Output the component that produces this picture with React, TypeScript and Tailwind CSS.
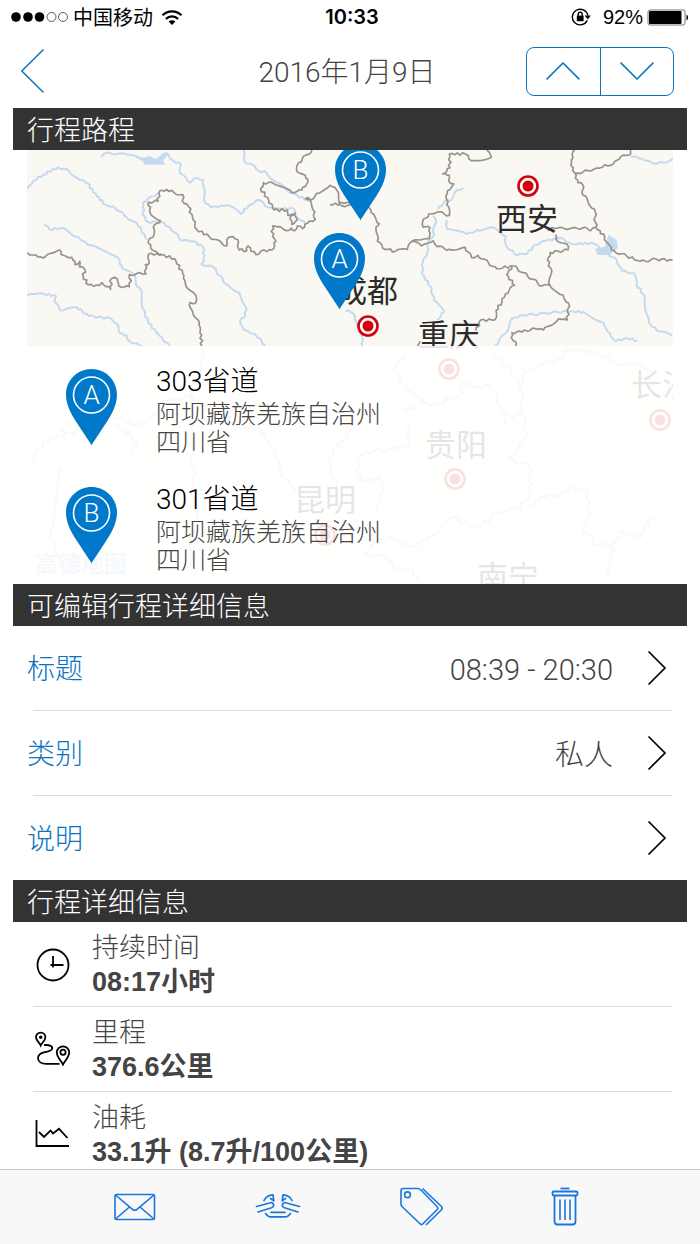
import type { ReactNode } from "react";

interface Stop {
    letter: string;
    road: string;
    region: string;
    province: string;
}

const STOPS: Stop[] = [
    { letter: 'A', road: '303省道', region: '阿坝藏族羌族自治州', province: '四川省' },
    { letter: 'B', road: '301省道', region: '阿坝藏族羌族自治州', province: '四川省' },
];

const EDITABLE_ROWS = [
    { label: '标题', value: '08:39 - 20:30' },
    { label: '类别', value: '私人' },
    { label: '说明', value: '' },
];

// Map lines, left and right halves, on a 3x grid
const BORDERS_LEFT = [
    "M82 338 L100 345 L130 354 L152 340 L178 330 L190 346 L215 352 L225 374 L240 364 L238 380 L254 388 L250 410 L265 434 L298 436 L306 428 L332 448 L334 416 L352 416 L356 438 L388 440 L394 422 L388 404 L420 398 L438 402 L436 374 L448 368 L446 342 L486 344",
    "M482 242 L450 218 L446 186 L474 184 L478 154 L500 148 L522 158 L548 164 L552 190 L566 200 L580 240 L590 268 L628 290 L680 318 L686 292 L700 290 L716 306 L718 330 L740 332 L744 318 L768 344 L784 332 L816 330 L828 304 L818 290 L818 258 L840 260 L860 272 L874 264 L884 272 L892 258 L908 266 L922 250 L946 238 L940 210 L930 180 L916 176 L940 176 L950 160 L990 136 L1010 150 L1018 188 L1034 200 L1060 194",
    "M482 242 L460 262 L462 284 L446 300 L452 324 L476 342 L524 356 L548 400 L556 430 L590 476 L586 490 L570 488 L574 508 L598 546 L606 618",
    "M936 30 L920 44 L896 68 L892 96 L916 106 L924 126 L906 150 L876 158 L820 130 L790 128 L782 146 L806 180 L822 210 L862 210 L864 226 L884 226 L892 240 L876 254 L870 236 L888 218",
];

const RIVERS_LEFT = [
    "M82 148 L100 122 L130 104 L174 82 L206 92 L232 114 L262 130 L290 168 L316 194 L346 204 L380 232 L412 250 L440 298",
    "M132 254 L148 268 L190 264 L228 290 L270 316 L330 342 L356 356 L366 384 L404 402 L412 440 L424 450 L430 508 L446 550 L480 588 L508 618",
    "M82 466 L116 460 L168 468 L164 486 L184 512 L230 502 L266 528 L334 536 L356 560 L360 580 L380 586 L388 604 L428 618",
    "M304 52 L320 38 L380 44 L430 56 L460 62 L500 40 L520 62 L544 74 L540 100 L570 128 L584 114 L610 120 L612 180 L632 202 L664 196 L690 198 L722 222 L746 196 L776 180 L806 202 L840 206 L880 206 L890 230 L916 250",
    "M476 158 L430 186 L430 226 L444 246 L486 246 L510 262 L546 302 L580 304 L610 322 L612 364 L604 372 L640 382 L680 434 L718 458 L738 500 L736 526 L720 544 L730 568 L768 586 L796 616",
    "M730 30 L736 68 L760 76 L776 92 L800 98 L822 122 L876 160 L930 184",
];

const BORDERS_RIGHT = [
    "M-60 194 L-20 190 L20 186 L62 208 L76 232 L88 252 L78 270 L82 304 L98 324 L136 334 L172 328 L186 304 L214 318 L250 302 L262 320 L298 328 L346 322 L364 352 L384 346 L440 386 L490 378 L520 398 L576 438 L600 436 L640 466 L656 490 L652 540 L626 536 L580 570 L556 566 L516 576 L486 578 L484 592 L498 606 L496 618",
    "M186 304 L210 300 L238 296 L240 264 L220 262 L218 244 L236 222 L262 216 L298 226 L298 206 L290 194 L292 152 L312 132 L296 122 L298 106 L278 102 L300 84 L298 42 L346 42 L364 62 L424 52 L410 30",
    "M674 30 L664 60 L668 92 L676 100 L714 92 L740 84 L790 72 L812 50 L842 42 L842 30",
    "M676 100 L684 128 L698 134 L696 158 L714 184 L734 208 L738 262 L764 290 L784 330 L830 348 L870 364 L920 358 L968 360",
    "M590 268 L630 262 L690 268 L704 262 L722 272 L738 262",
    "M616 284 L618 298 L650 312 L654 330 L600 338 L592 360 L602 384 L600 436",
    "M486 380 L470 404 L494 436 L466 462 L456 486 L438 512 L434 540 L392 540 L378 572",
    "M210 604 L202 618",
];

const RIVERS_RIGHT = [
    "M340 144 L322 150 L306 178 L284 184 L264 208",
    "M248 228 L258 240 L252 262 L250 290 L234 306 L232 336 L218 368 L218 404 L242 440 L252 480 L282 516 L262 540",
    "M290 240 L292 268 L350 282 L380 270 L436 264 L468 290 L466 308 L480 330 L502 346 L532 340 L556 314 L590 302 L630 294 L666 312 L730 310 L764 336 L800 360 L816 392 L852 400 L860 434 L880 462 L896 546 L920 572 L966 586",
    "M434 618 L466 580 L488 534 L520 526 L590 520 L640 514 L700 516 L760 548 L780 580 L798 604 L830 594 L862 602",
    "M842 50 L876 56 L908 70 L942 68 L968 56",
    "M-14 512 L10 520 L22 560 L36 590 L38 618",
];

const BORDERS_BOTTOM = [
    "M90 350 L130 290 L210 262 L270 250 L340 215 L400 238 L440 235 L480 180 L560 150 L720 250 L780 252 L830 330 L850 400 L890 440",
    "M340 235 L390 270 L410 305 L390 325",
    "M610 10 L600 90 L570 140 L575 330 L590 520 L570 600 L585 700",
    "M1100 200 L1040 280 L1000 310 L990 370 L1010 420",
    "M1216 30 L1180 70 L1220 130 L1290 185 L1380 150 L1390 110 L1430 130 L1470 120 L1500 180 L1540 220 L1570 190 L1575 280 L1530 345 L1590 360 L1590 440 L1560 490 L1500 500 L1470 525 L1420 550 L1360 515 L1300 570 L1240 605 L1170 580 L1110 600 L1100 630 L1160 640 L1180 670 L1240 675 L1255 705",
    "M1250 190 L1210 190 L1220 215",
    "M1520 240 L1500 185",
    "M1480 30 L1530 70 L1560 120 L1570 190",
    "M1560 120 L1580 80 L1620 55 L1690 45 L1690 15 L1780 20 L1860 60 L1930 60 L1960 90",
    "M1590 480 L1640 450 L1680 455 L1710 430 L1760 435 L1770 500 L1750 550 L1790 600 L1840 600 L1820 700",
    "M1840 600 L1860 560 L1920 580 L1950 520 L1966 518",
    "M1070 350 L1090 320 L1160 315 L1225 300 L1225 240",
    "M1070 350 L1080 405 L1140 395 L1150 430 L1130 500",
    "M180 370 L150 560 L175 640",
    "M180 250 L200 290",
];

const CITY_DOTS = [
    { cx: 501, cy: 36 },
    { cx: 341, cy: 176 },
    { cx: 422, cy: 219 },
    { cx: 633, cy: 270 },
    { cx: 428, cy: 329 },
    { cx: 298, cy: 385 },
];

const CITY_NAMES = [
    { name: '西安', x: 469, y: 80 },
    { name: '成都', x: 309, y: 152 },
    { name: '重庆', x: 391, y: 196 },
    { name: '贵阳', x: 398, y: 306 },
    { name: '昆明', x: 267, y: 361 },
    { name: '长沙', x: 604, y: 246 },
    { name: '南宁', x: 450, y: 438 },
];

// Splits every segment into short steps and wobbles them, so lines look surveyed
function roughen(d: string, amount: number) {
    const points = d.slice(1).split(' L').map((p) => p.split(' ').map(Number));
    let out = `M${points[0][0]} ${points[0][1]}`;
    for (let i = 1; i < points.length; i++) {
        const [x0, y0] = points[i - 1];
        const [x1, y1] = points[i];
        const length = Math.hypot(x1 - x0, y1 - y0);
        const steps = Math.max(1, Math.round(length / 8));
        for (let s = 1; s < steps; s++) {
            const x = x0 + ((x1 - x0) * s) / steps;
            const y = y0 + ((y1 - y0) * s) / steps;
            const offset = Math.sin(x * 12.9898 + y * 78.233) * amount;
            out += `L${(x - ((y1 - y0) / length) * offset).toFixed(1)} ${(y + ((x1 - x0) / length) * offset).toFixed(1)}`;
        }
        out += `L${x1} ${y1}`;
    }
    return out;
}

function PinShape({ letter }: { letter: string }) {
    return (
        <>
            <path
                d="M25.500 0C11.400 0 0 11.400 0 25.500C0 36 5 44.500 10 52.500L21.500 70C23.500 73 24.500 74 25.500 76.500C26.500 74 27.500 73 29.500 70L41 52.500C46 44.500 51 36 51 25.500C51 11.400 39.600 0 25.500 0Z"
                fill="#0079cb"
            />
            <circle cx="25.500" cy="26" r="18" fill="none" stroke="#fff" strokeWidth="1.600" />
            <text x="25.500" y="34.500" textAnchor="middle" fontSize="26" fill="#fff" className="font-['Roboto',sans-serif] font-light">
                {letter}
            </text>
        </>
    );
}

function Lines({ paths, color, width, wobble }: { paths: string[]; color: string; width: number; wobble: number }) {
    return (
        <g fill="none" stroke={color} strokeWidth={width} strokeLinejoin="round">
            {paths.map((d) => <path key={d} d={roughen(d, wobble)} />)}
        </g>
    );
}

function RouteMap() {
    return (
        <svg
            className="absolute inset-0 h-full w-full"
            viewBox="0 0 646 434"
            preserveAspectRatio="xMidYMin slice"
            role="img"
            aria-label="行程路程"
        >
            <rect width="646" height="434" fill="#faf8f2" />
            <g transform="translate(-27 -10) scale(.3333)">
                <Lines paths={RIVERS_LEFT} color="#c3daf0" width={6} wobble={3} />
                <path d="M396 46L430 54L448 48L470 58L488 40L504 44L490 60L494 74L434 74L428 64Z" fill="#c3daf0" />
                <Lines paths={BORDERS_LEFT} color="#96938b" width={5} wobble={4} />
            </g>
            <g transform="translate(323 -10) scale(.3333)">
                <Lines paths={RIVERS_RIGHT} color="#c3daf0" width={6} wobble={3} />
                <path d="M776 284L800 300L804 324L790 334L780 346L742 344L736 326L764 320Z" fill="#c3daf0" />
                <Lines paths={BORDERS_RIGHT} color="#96938b" width={5} wobble={4} />
            </g>
            <g transform="translate(-27 195) scale(.3333)">
                <Lines paths={BORDERS_BOTTOM} color="#d6c2c2" width={6} wobble={6} />
            </g>
            {CITY_DOTS.map((dot) => (
                <g key={`${dot.cx}-${dot.cy}`}>
                    <circle cx={dot.cx} cy={dot.cy} r="9.500" fill="#fff" stroke="#d4000f" strokeWidth="2.600" />
                    <circle cx={dot.cx} cy={dot.cy} r="5.500" fill="#d4000f" />
                </g>
            ))}
            <g fontSize="31" fill="#2b2b2b" className="font-['Noto_Sans_CJK_SC',sans-serif]">
                {CITY_NAMES.map((city) => <text key={city.name} x={city.x} y={city.y}>{city.name}</text>)}
            </g>
            <text x="8" y="422" fontSize="23" fill="#a9c4e4" className="font-['Noto_Sans_CJK_SC',sans-serif] font-bold">
                高德地图
            </text>
            <g transform="translate(308 -6)"><PinShape letter="B" /></g>
            <g transform="translate(287 83)"><PinShape letter="A" /></g>
        </svg>
    );
}

function SectionHeader({ children }: { children: ReactNode }) {
    return (
        <h2 className="mx-[13px] flex h-[42px] items-center bg-[#333] px-[14px] pt-1 text-[27px] leading-[36px] font-light text-white">
            {children}
        </h2>
    );
}

function StatusBar() {
    return (
        <div className="grid h-[34px] grid-cols-[1fr_auto_1fr] items-center px-[11px] text-black">
            <div className="flex items-center">
                <svg width="58" height="12" viewBox="0 0 58 12">
                    <g fill="#000">
                        <circle cx="5" cy="6" r="4.800" />
                        <circle cx="17" cy="6" r="4.800" />
                        <circle cx="28.500" cy="6" r="4.800" />
                    </g>
                    <g fill="none" stroke="#333" strokeWidth="0.800">
                        <circle cx="40.500" cy="6" r="4.500" />
                        <circle cx="52" cy="6" r="4.500" />
                    </g>
                </svg>
                <span className="ml-1 font-['Noto_Sans_CJK_SC',sans-serif] text-[20px] leading-[24px]">中国移动</span>
                <svg className="ml-2" width="22" height="17" viewBox="0 0 22 17" fill="none" stroke="#000" strokeWidth="2.300">
                    <path d="M1.500 6.200C6.800 1 15.200 1 20.500 6.200" />
                    <path d="M5 9.800C8.300 6.600 13.700 6.600 17 9.800" />
                    <path d="M11 16L7.600 12.600C9.500 10.900 12.500 10.900 14.400 12.600Z" fill="#000" stroke="none" />
                </svg>
            </div>
            <span className="pl-1 font-['Inter',sans-serif] text-[20px] leading-[24px] font-semibold">10:33</span>
            <div className="flex items-center justify-end">
                <svg width="20" height="18" viewBox="0 0 20 18" fill="none" stroke="#000" strokeWidth="1.400">
                    <path d="M16.200 12.400A7.800 7.800 0 1 1 16.800 7.500" />
                    <path d="M13.600 7.400H19.800L16.800 11.400Z" fill="#000" stroke="none" />
                    <rect x="5.800" y="7.600" width="6.800" height="5.600" fill="#000" stroke="none" />
                    <path d="M7.200 8V6.200A2 2 0 0 1 11.200 6.200V8" />
                </svg>
                <span className="ml-3 font-['Liberation_Sans',sans-serif] text-[20px] leading-[24px]">92%</span>
                <svg className="ml-1" width="42" height="17" viewBox="0 0 42 17">
                    <rect x="1" y="1" width="37" height="15" rx="2" fill="#fff" stroke="#777" strokeWidth="1" />
                    <rect x="2" y="2" width="32.500" height="13" rx="1" fill="#000" />
                    <path d="M39.500 5.500C41.600 6.200 41.600 10.800 39.500 11.500Z" fill="#000" />
                </svg>
            </div>
        </div>
    );
}

function NavBar() {
    return (
        <header className="grid h-[74px] grid-cols-[1fr_auto_1fr] items-center pr-[26px] pl-5 text-[#0b74bf]">
            <button type="button" aria-label="返回" className="justify-self-start">
                <svg width="25" height="46" viewBox="0 0 25 46" fill="none" stroke="currentColor" strokeWidth="1.500">
                    <path d="M23.500 1.500L1.800 23L23.500 44.500" />
                </svg>
            </button>
            <h1 className="pt-[3px] text-[28px] leading-[36px] font-light text-[#444]">2016年1月9日</h1>
            <div className="flex h-[49px] w-[148px] divide-x divide-[#0b74bf] justify-self-end rounded-lg border border-[#0b74bf]">
                <button type="button" aria-label="上一个" className="flex flex-1 items-center justify-center">
                    <svg width="34" height="18" viewBox="0 0 34 18" fill="none" stroke="currentColor" strokeWidth="1.500">
                        <path d="M0.600 17.400L17 1L33.400 17.400" />
                    </svg>
                </button>
                <button type="button" aria-label="下一个" className="flex flex-1 items-center justify-center">
                    <svg width="34" height="18" viewBox="0 0 34 18" fill="none" stroke="currentColor" strokeWidth="1.500">
                        <path d="M0.600 0.600L17 17L33.400 0.600" />
                    </svg>
                </button>
            </div>
        </header>
    );
}

function DetailRow({ icon, label, value }: { icon: ReactNode; label: string; value: string }) {
    return (
        <div className="mr-7 ml-[33px] flex items-center border-b border-[#dcdcdc] py-2 last:border-b-0 last:pb-0">
            <div className="w-[59px] shrink-0">{icon}</div>
            <dl className="text-[27px] text-[#444]">
                <dt className="leading-[36px] font-light">{label}</dt>
                <dd className="font-['Liberation_Sans','Noto_Sans_CJK_SC',sans-serif] leading-[32px] font-bold">{value}</dd>
            </dl>
        </div>
    );
}

function ClockIcon() {
    return (
        <svg width="38" height="38" viewBox="0 0 38 38" fill="none" stroke="#000" strokeWidth="1.800">
            <circle cx="20" cy="20" r="15.500" />
            <path d="M20 11V22.500M17.500 20H30.500" />
        </svg>
    );
}

function RouteIcon() {
    return (
        <svg width="38" height="38" viewBox="0 0 38 38" fill="none" stroke="#000" strokeWidth="1.800">
            <path d="M7.700 15.500C6.500 12.500 3 10.500 3 7.300A4.700 4.700 0 0 1 12.400 7.300C12.400 10.500 9 12.500 7.700 15.500Z" />
            <circle cx="7.700" cy="7.200" r="1.700" fill="#000" stroke="none" />
            <path d="M30 34.500C28 30.500 23.800 27 23.800 22.500A6.200 6.200 0 0 1 36.200 22.500C36.200 27 32 30.500 30 34.500Z" />
            <circle cx="30" cy="22.300" r="2.600" />
            <path d="M11 15.200C16 14.500 19.500 16 19.200 18.500C18.800 21.500 14 21.500 11 22.300C7 23.300 4.800 25.500 5 28.500C5.300 32 9 33.800 13 33.800H26.500" />
        </svg>
    );
}

function ChartIcon() {
    return (
        <svg width="38" height="38" viewBox="0 0 38 38" fill="none" stroke="#000" strokeWidth="1.800">
            <path d="M3.500 5V31H36" />
            <path d="M6 17L11 22L17.500 15.500L20 18.500L26 13.800L34.500 23" />
        </svg>
    );
}

function ToolbarButton({ label, children }: { label: string; children: ReactNode }) {
    return (
        <button type="button" aria-label={label} className="flex flex-1 justify-center">
            {children}
        </button>
    );
}

function Toolbar() {
    return (
        <footer className="flex h-[75px] items-center border-t border-[#c8c8c8] bg-[#f8f8f8] px-[63px] text-[#1a76dc]">
            <ToolbarButton label="发送邮件">
                <svg width="44" height="40" viewBox="0 0 44 40" fill="none" stroke="currentColor" strokeWidth="1.600" strokeLinejoin="round">
                    <rect x="2" y="7.500" width="39.500" height="25" rx="1.500" />
                    <path d="M2.500 8L19.500 22.300C21 23.600 22.500 23.600 24 22.300L41 8M2.500 32L16.500 20M41 32L27 20" />
                </svg>
            </ToolbarButton>
            <ToolbarButton label="合并行程">
                <svg width="50" height="40" viewBox="0 0 50 40" fill="none" stroke="currentColor" strokeWidth="1.700" strokeLinejoin="round" strokeLinecap="round">
                    <path d="M3.500 19.500L17.500 15.700C20.800 15 22 19.400 18.500 20.800L5 25" />
                    <path d="M46.500 19.500L32.500 15.700C29.200 15 28 19.400 31.500 20.800L45 25" />
                    <path d="M11 13.500C12.500 10 16 8 20 7.800L20.800 13.800L17.500 11.500" />
                    <path d="M39 13.500C37.500 10 34 8 30 7.800L29.200 13.800L32.500 11.500" />
                    <path d="M18 25.300H32M12.500 26.500L14.500 28.600C15.300 29.400 16 29.800 17.200 29.800H32.800C34 29.800 34.700 29.400 35.500 28.600L37.500 26.500" />
                </svg>
            </ToolbarButton>
            <ToolbarButton label="标签">
                <svg width="46" height="40" viewBox="0 0 46 40" fill="none" stroke="currentColor" strokeWidth="1.600" strokeLinejoin="round">
                    <path d="M2 4C2 2.500 3 1.500 4.500 1.500H18.500C20 1.500 21 2 22 3L38 19.500C39 20.500 39 21.800 38 22.800L24 36.800C23 37.800 22 37.800 21 36.800L3 19.500C2.300 18.800 2 18 2 17Z" />
                    <circle cx="8.500" cy="7.800" r="2.900" />
                    <path d="M23.500 1.500L42.500 19.500C43.500 20.500 43.500 21.800 42.500 22.800L27 38" />
                </svg>
            </ToolbarButton>
            <ToolbarButton label="删除">
                <svg width="30" height="40" viewBox="0 0 30 40" fill="none" stroke="currentColor" strokeWidth="1.800">
                    <path d="M10.500 1.500H19.500" />
                    <rect x="2.500" y="4.500" width="25" height="4" rx="1.200" />
                    <path d="M4.500 8.500V34.500C4.500 36.500 5.500 37.500 7.500 37.500H22.500C24.500 37.500 25.500 36.500 25.500 34.500V8.500" />
                    <path d="M10 12.500V33M15 12.500V33M20 12.500V33" strokeWidth="1.600" />
                </svg>
            </ToolbarButton>
        </footer>
    );
}

export default function App() {
    return (
        <div className="flex min-h-screen flex-col bg-white font-['Roboto','Noto_Sans_CJK_SC',sans-serif]">
            <StatusBar />
            <NavBar />

            <main className="flex-1">
                <SectionHeader>行程路程</SectionHeader>
                <section className="relative mx-[27px] overflow-hidden pt-[196px]">
                    <RouteMap />
                    {/* White sheet that fades the lower part of the map */}
                    <ul className="relative flex flex-col gap-6 bg-white/88 pt-[17px] pb-[9px] pl-[39px]">
                        {STOPS.map((stop) => (
                            <li key={stop.letter} className="flex gap-[39px]">
                                <svg className="mt-[6px] shrink-0" width="51" height="77" viewBox="0 0 51 77">
                                    <PinShape letter={stop.letter} />
                                </svg>
                                <div className="text-[25px] leading-[28px] font-light text-[#444]">
                                    <h3 className="text-[28px] leading-[38px] text-black">{stop.road}</h3>
                                    <p>{stop.region}</p>
                                    <p>{stop.province}</p>
                                </div>
                            </li>
                        ))}
                    </ul>
                </section>

                <SectionHeader>可编辑行程详细信息</SectionHeader>
                <section>
                    {EDITABLE_ROWS.map((row) => (
                        <div key={row.label} className="group">
                            <button type="button" className="flex h-[84px] w-full items-center pr-[33px] pl-[27px] text-[28px] leading-[36px] font-light">
                                <span className="pt-[3px] text-[#0b74bf]">{row.label}</span>
                                <span className="mr-[34px] ml-auto pt-[3px] text-[29px] text-[#444]">{row.value}</span>
                                <svg width="20" height="36" viewBox="0 0 20 36" fill="none" stroke="#000" strokeWidth="1.700">
                                    <path d="M1.500 1.500L18 18L1.500 34.500" />
                                </svg>
                            </button>
                            <div className="mr-7 ml-[33px] h-px bg-[#dcdcdc] group-last:hidden" />
                        </div>
                    ))}
                </section>

                <SectionHeader>行程详细信息</SectionHeader>
                <section>
                    <DetailRow icon={<ClockIcon />} label="持续时间" value="08:17小时" />
                    <DetailRow icon={<RouteIcon />} label="里程" value="376.6公里" />
                    <DetailRow icon={<ChartIcon />} label="油耗" value="33.1升 (8.7升/100公里)" />
                </section>
            </main>

            <Toolbar />
        </div>
    );
}
